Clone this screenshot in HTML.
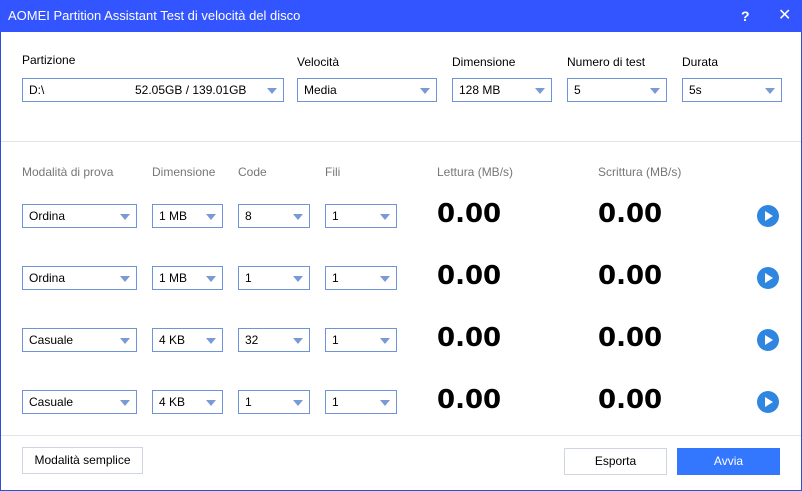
<!DOCTYPE html>
<html><head><meta charset="utf-8"><style>
*{box-sizing:border-box;margin:0;padding:0}
body{width:802px;height:491px;overflow:hidden;background:#fff;font-family:"Liberation Sans","DejaVu Sans",sans-serif;font-size:12px;color:#000;position:relative}
.win{position:absolute;left:0;top:0;width:802px;height:491px;border:1px solid #2b4fd6;border-top:none}
.title{position:absolute;left:0;top:0;width:802px;height:32px;background:#3355ff;color:#fff;font-size:13px;line-height:32px;padding-left:8px}
.title .q{position:absolute;left:741px;top:0;font-weight:bold;font-size:14px}
.title .x{position:absolute;left:778px;top:0;font-size:16px}
.l{position:absolute;font-size:12px}
.g{color:#777}
.dd{position:absolute;height:24px;border:1px solid #6f93d9;line-height:22px;padding-left:6px;font-size:12px;background:#fff}
.dd:after{content:"";position:absolute;right:6px;top:9px;border-left:5px solid transparent;border-right:5px solid transparent;border-top:6px solid #7a9ad6}
.num{position:absolute;font-weight:bold;font-size:26px;font-family:"DejaVu Sans",sans-serif}
.play{position:absolute;width:22px;height:22px;border-radius:50%;background:#2f86e0}
.play:after{content:"";position:absolute;left:8px;top:6px;border-top:5px solid transparent;border-bottom:5px solid transparent;border-left:8px solid #fff}
.hr{position:absolute;left:1px;width:800px;height:1px;background:#e2e4e8}
.btn{position:absolute;height:27px;line-height:25px;text-align:center;font-size:12px;border:1px solid #cfd6e2}
</style></head><body>
<div class="win"></div>
<div class="title">AOMEI Partition Assistant Test di velocità del disco<span class="q">?</span><span class="x">✕</span></div>

<div class="l" style="left:22px;top:53px">Partizione</div>
<div class="l" style="left:297px;top:55px">Velocità</div>
<div class="l" style="left:452px;top:55px">Dimensione</div>
<div class="l" style="left:567px;top:55px">Numero di test</div>
<div class="l" style="left:682px;top:55px">Durata</div>
<div class="dd" style="left:22px;top:78px;width:262px">D:\<span style="position:absolute;left:112px">52.05GB / 139.01GB</span></div>
<div class="dd" style="left:297px;top:78px;width:140px">Media</div>
<div class="dd" style="left:452px;top:78px;width:100px">128 MB</div>
<div class="dd" style="left:567px;top:78px;width:100px">5</div>
<div class="dd" style="left:682px;top:78px;width:100px">5s</div>
<div class="hr" style="top:141px"></div>

<div class="l g" style="left:22px;top:165px">Modalità di prova</div>
<div class="l g" style="left:152px;top:165px">Dimensione</div>
<div class="l g" style="left:238px;top:165px">Code</div>
<div class="l g" style="left:325px;top:165px">Fili</div>
<div class="l g" style="left:437px;top:165px">Lettura (MB/s)</div>
<div class="l g" style="left:598px;top:165px">Scrittura (MB/s)</div>

<div class="dd" style="left:22px;top:204px;width:115px">Ordina</div>
<div class="dd" style="left:152px;top:204px;width:71px">1 MB</div>
<div class="dd" style="left:238px;top:204px;width:72px">8</div>
<div class="dd" style="left:325px;top:204px;width:72px">1</div>
<div class="num" style="left:437px;top:199px">0.00</div>
<div class="num" style="left:598px;top:199px">0.00</div>
<div class="play" style="left:757px;top:205px"></div>

<div class="dd" style="left:22px;top:266px;width:115px">Ordina</div>
<div class="dd" style="left:152px;top:266px;width:71px">1 MB</div>
<div class="dd" style="left:238px;top:266px;width:72px">1</div>
<div class="dd" style="left:325px;top:266px;width:72px">1</div>
<div class="num" style="left:437px;top:261px">0.00</div>
<div class="num" style="left:598px;top:261px">0.00</div>
<div class="play" style="left:757px;top:267px"></div>

<div class="dd" style="left:22px;top:328px;width:115px">Casuale</div>
<div class="dd" style="left:152px;top:328px;width:71px">4 KB</div>
<div class="dd" style="left:238px;top:328px;width:72px">32</div>
<div class="dd" style="left:325px;top:328px;width:72px">1</div>
<div class="num" style="left:437px;top:323px">0.00</div>
<div class="num" style="left:598px;top:323px">0.00</div>
<div class="play" style="left:757px;top:329px"></div>

<div class="dd" style="left:22px;top:390px;width:115px">Casuale</div>
<div class="dd" style="left:152px;top:390px;width:71px">4 KB</div>
<div class="dd" style="left:238px;top:390px;width:72px">1</div>
<div class="dd" style="left:325px;top:390px;width:72px">1</div>
<div class="num" style="left:437px;top:385px">0.00</div>
<div class="num" style="left:598px;top:385px">0.00</div>
<div class="play" style="left:757px;top:391px"></div>

<div class="hr" style="top:435px"></div>
<div class="btn" style="left:22px;top:447px;width:121px">Modalità semplice</div>
<div class="btn" style="left:564px;top:448px;width:103px">Esporta</div>
<div class="btn" style="left:677px;top:448px;width:103px;background:#3377ff;border-color:#3377ff;color:#fff">Avvia</div>
</body></html>
